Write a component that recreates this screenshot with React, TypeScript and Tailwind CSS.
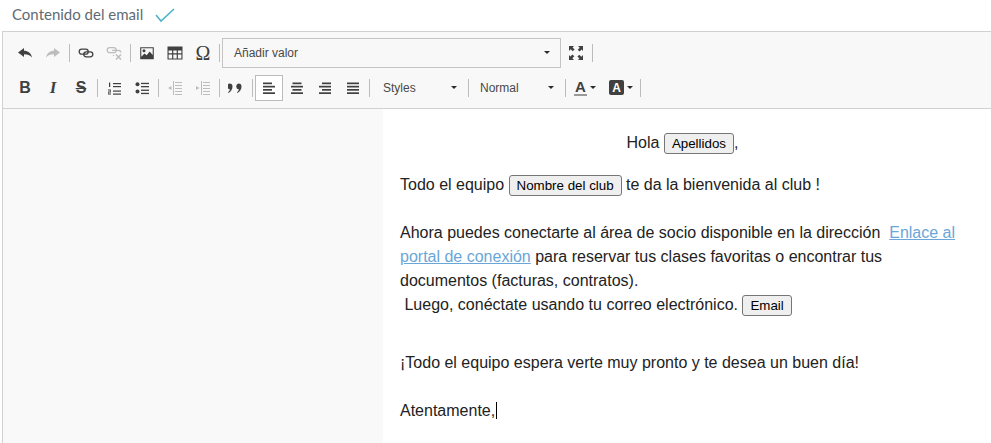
import type { ReactNode } from "react";

// ─── Toolbar bits ────────────────────────────────────────────────────────────

function Sep() {
  return <span className="mx-[2px] h-[18px] w-px shrink-0 bg-[#bcbcbc]" />;
}

function Btn({ children, on }: { children: ReactNode; on?: boolean }) {
  return (
    <span
      className={`flex h-[26px] w-[28px] shrink-0 items-center justify-center ${
        on ? "border border-[#bcbcbc] bg-white" : ""
      }`}
    >
      {children}
    </span>
  );
}

function Caret({ className = "" }: { className?: string }) {
  return <span className={`h-0 w-0 border-x-[3px] border-t-[3px] border-x-transparent border-t-[#2b2b2b] ${className}`} />;
}

function Ico({ children, off }: { children: ReactNode; off?: boolean }) {
  return (
    <svg viewBox="0 0 16 16" className={`h-4 w-4 ${off ? "text-[#bdbdbd]" : "text-[#404040]"}`} fill="currentColor">
      {children}
    </svg>
  );
}

const lines = (rows: number[][]) =>
  rows.map(([x, y, w, h], i) => <rect key={i} x={x} y={y} width={w} height={h ?? 1.7} />);

function Combo({ label, width, pad }: { label: string; width: string; pad: string }) {
  return (
    <span className={`flex h-[26px] shrink-0 items-center justify-between pr-[9px] text-[12px] text-[#484848] ${pad} ${width}`}>
      {label}
      <Caret />
    </span>
  );
}

function Tag({ children }: { children: ReactNode }) {
  return (
    <span className="inline-block h-[21px] rounded-[3px] border border-[#767676] bg-[#efefef] px-[7px] align-[0px] text-[13.33px] leading-[19px] text-black">
      {children}
    </span>
  );
}

const INDENT_LINES = [
  [8, 2, 7, 1],
  [8, 5, 7, 1],
  [8, 8, 7, 1],
  [8, 11, 7, 1],
  [8, 14, 7, 1],
];

export default function App() {
  return (
    <div className="h-[443px] w-[991px] overflow-hidden bg-white font-['Liberation_Sans',sans-serif]">
      {/* Heading */}
      <div className="flex h-[31px] items-center pb-[2px] pl-[12px]">
        <span className="font-['Lato',sans-serif] text-[15px] text-[#5f6b73]">Contenido del email</span>
        <svg viewBox="0 0 20 16" className="ml-[12px] h-[16px] w-[20px]" fill="none" stroke="#4fb3c8" strokeWidth="1.6">
          <path d="M1 8l5 6L19 2" />
        </svg>
      </div>

      {/* Editor */}
      <div className="ml-[2px] border-l border-t border-[#d1d1d1]">
        <div className="h-[77px] border-b border-[#d1d1d1] bg-[#f8f8f8] pl-[8px]">
          {/* Row 1 */}
          <div className="flex h-[29px] translate-y-[6px] items-center">
            <Btn>
              <Ico><path d="M1 7.5L7 3v2.8c4 0 7 2.2 8 6.7-2-2.6-4.2-3.3-8-3.3V12z" /></Ico>
            </Btn>
            <Btn>
              <Ico off><path d="M15 7.5L9 3v2.8c-4 0-7 2.2-8 6.7 2-2.6 4.2-3.3 8-3.3V12z" /></Ico>
            </Btn>
            <Sep />
            <Btn>
              <svg viewBox="0 0 16 16" className="h-4 w-4" fill="none" stroke="#404040" strokeWidth="1.3">
                <rect x="1.2" y="4.2" width="9" height="5" rx="2.5" />
                <rect x="5.8" y="6.8" width="9" height="5" rx="2.5" />
              </svg>
            </Btn>
            <Btn>
              <svg viewBox="0 0 16 16" className="h-4 w-4" fill="none" stroke="#bdbdbd" strokeWidth="1.3">
                <rect x="1.2" y="2.7" width="9" height="5" rx="2.5" />
                <path d="M6 5.3h6.5a2.4 2.4 0 012.3 2.2M8 10.3H7" />
                <path d="M10 9.5l5 5M15 9.5l-5 5" strokeWidth="1.6" />
              </svg>
            </Btn>
            <Sep />
            <Btn>
              <Ico>
                <path d="M1.2 2.2h13.6v12H1.2zm1.1 1.1v8.4l3.2-3.3 2.1 1.8 3.1-3.8 3 3.6V3.3zM5 4.3a1.5 1.5 0 110 3 1.5 1.5 0 010-3z" fillRule="evenodd" />
              </Ico>
            </Btn>
            <Btn>
              <Ico>
                <path d="M.5 1.5h15v13H.5zM1.6 5.6v2.6h3.5V5.6zm4.7 0v2.6h3.4V5.6zm4.6 0v2.6h3.5V5.6zM1.6 9.4v4h3.5v-4zm4.7 0v4h3.4v-4zm4.6 0v4h3.5v-4z" fillRule="evenodd" />
              </Ico>
            </Btn>
            <Btn>
              <span className="font-['Liberation_Serif',serif] text-[20px] leading-none text-[#404040]">Ω</span>
            </Btn>
            <Sep />
            <span className="flex h-[30px] w-[339px] shrink-0 items-center justify-between border border-[#c4c4c4] pl-[11px] pr-[10px] text-[12px] text-[#484848]">
              Añadir valor
              <Caret />
            </span>
            <span className="flex h-[26px] w-[29px] shrink-0 items-center justify-center">
              <Ico>
                <path d="M1 1h5L4.6 2.4l2 2-1.9 1.9-2-2L1 6zM15 1v5l-1.4-1.4-2 2-1.9-1.9 2-2L10 1zM1 15v-5l1.4 1.4 2-2 1.9 1.9-2 2L6 15zM15 15h-5l1.4-1.4-2-2 1.9-1.9 2 2L15 10z" />
              </Ico>
            </span>
            <Sep />
          </div>

          {/* Row 2 */}
          <div className="mt-[6px] flex h-[29px] translate-y-[6px] items-center">
            <Btn><span className="text-[16px] font-bold text-[#404040]">B</span></Btn>
            <Btn><span className="font-['Liberation_Serif',serif] text-[17px] font-bold italic text-[#404040]">I</span></Btn>
            <Btn><span className="text-[16px] font-bold text-[#404040] line-through">S</span></Btn>
            <Sep />
            <Btn>
              <Ico>
                {lines([[7, 3, 8, 1.2], [7, 6, 8, 1.2], [7, 10.5, 8, 1.2], [7, 13.5, 8, 1.2]])}
                <rect x="3" y="2.5" width="1.2" height="4.5" />
                <rect x="2" y="9.5" width="3" height="1" />
                <rect x="4" y="10.5" width="1" height="1" />
                <rect x="2" y="11.5" width="3" height="1" />
                <rect x="2" y="12.5" width="1" height="1" />
                <rect x="2" y="13.5" width="3" height="1" />
              </Ico>
            </Btn>
            <Btn>
              <Ico>
                {lines([[7, 2.8, 8, 1.3], [7, 6, 8, 1.3], [7, 9.6, 8, 1.3], [7, 12.8, 8, 1.3]])}
                <circle cx="3.5" cy="4.2" r="2" />
                <circle cx="3.5" cy="11.4" r="2" />
              </Ico>
            </Btn>
            <Sep />
            <Btn>
              <Ico off>
                {lines(INDENT_LINES)}
                <rect x="6" y="1" width="1" height="14" />
                <path d="M4.5 6v4L1 8z" />
              </Ico>
            </Btn>
            <Btn>
              <Ico off>
                {lines(INDENT_LINES)}
                <rect x="6" y="1" width="1" height="14" />
                <path d="M1 6v4L4.5 8z" />
              </Ico>
            </Btn>
            <Sep />
            <Btn>
              <Ico>
                <path d="M1.5 3.5a3 3 0 013 3c0 3-1.5 5-4 6.5l-.5-.8c1-.8 1.7-1.7 2-2.8a3 3 0 01-.5-5.9zM10.5 3.5a3 3 0 013 3c0 3-1.5 5-4 6.5l-.5-.8c1-.8 1.7-1.7 2-2.8a3 3 0 01-.5-5.9z" />
              </Ico>
            </Btn>
            <Sep />
            <Btn on>
              <Ico>{lines([[2, 2.5, 9], [2, 5.8, 12], [2, 9, 9], [2, 12.3, 12]])}</Ico>
            </Btn>
            <Btn>
              <Ico>{lines([[3.5, 2.5, 9], [2, 5.8, 12], [3.5, 9, 9], [2, 12.3, 12]])}</Ico>
            </Btn>
            <Btn>
              <Ico>{lines([[5, 2.5, 9], [2, 5.8, 12], [5, 9, 9], [2, 12.3, 12]])}</Ico>
            </Btn>
            <Btn>
              <Ico>{lines([[2, 2.5, 12], [2, 5.8, 12], [2, 9, 12], [2, 12.3, 12]])}</Ico>
            </Btn>
            <Sep />
            <Combo label="Styles" width="w-[94px]" pad="pl-[11px]" />
            <Sep />
            <Combo label="Normal" width="w-[92px]" pad="pl-[9px]" />
            <Sep />
            <span className="flex h-[26px] w-[38px] shrink-0 items-center pl-[6px]">
              <span className="border-b-2 border-[#9a9a9a] px-[1px] text-[15px] font-bold leading-[15px] text-[#404040]">A</span>
              <Caret className="ml-[3px]" />
            </span>
            <span className="flex h-[26px] w-[32px] shrink-0 items-center pl-[3px]">
              <span className="flex h-[15px] w-[15px] items-center justify-center rounded-[2px] bg-[#404040] text-[12px] font-bold text-white">A</span>
              <Caret className="ml-[3px]" />
            </span>
            <Sep />
          </div>
        </div>

        {/* Body */}
        <div className="flex h-[334px] bg-[#f9f9f9]">
          <div className="w-[380px] shrink-0" />
          <div className="flex-1 bg-white pl-[17px] pr-[26px] pt-[22px] text-[16px] leading-[24px] text-[#222222]">
            <p className="text-center">
              Hola <Tag>Apellidos</Tag>,
            </p>
            <p className="mt-[18px]">
              Todo el equipo <Tag>Nombre del club</Tag> te da la bienvenida al club !
            </p>
            <p className="mt-[24px]">
              Ahora puedes conectarte al área de socio disponible en la dirección&nbsp;{" "}
              <a className="text-[#6aa6d8] underline">Enlace al portal de conexión</a> para reservar tus clases favoritas
              o encontrar tus documentos (facturas, contratos).
              <br />
              &nbsp;Luego, conéctate usando tu correo electrónico. <Tag>Email</Tag>
            </p>
            <p className="mt-[34px]">¡Todo el equipo espera verte muy pronto y te desea un buen día!</p>
            <p className="mt-[24px]">
              Atentamente,<span className="ml-px inline-block h-[17px] w-px translate-y-[3px] bg-black" />
            </p>
          </div>
        </div>
      </div>
    </div>
  );
}
